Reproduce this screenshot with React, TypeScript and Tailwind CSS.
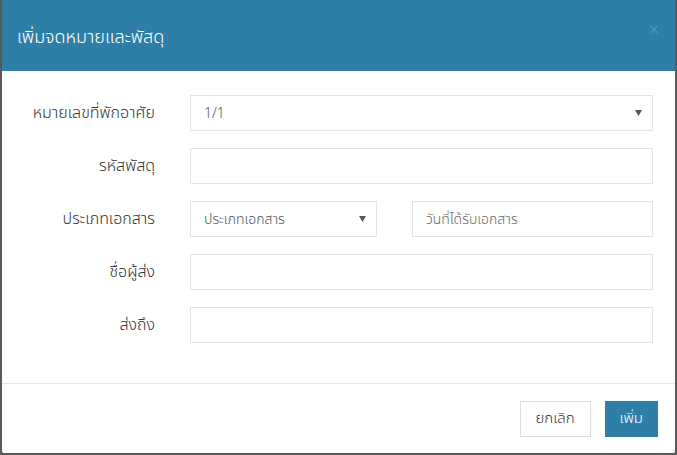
import { ChangeEvent, useState } from "react";

const font = { fontFamily: '"Noto Sans Thai", "Noto Sans", "Liberation Sans", sans-serif' };

function Caret() {
  return (
    <svg width="7" height="6" viewBox="0 0 7 6" className="shrink-0">
      <path d="M0 0 L7 0 L3.5 6 Z" fill="#555" />
    </svg>
  );
}

function Label({ children }: { children: string }) {
  return (
    <label className="w-[138px] shrink-0 text-right text-[16px] font-light text-[#333] leading-none">
      {children}
    </label>
  );
}

function TextBox({ placeholder, className = "" }: { placeholder?: string; className?: string }) {
  const [value, setValue] = useState("");
  return (
    <input
      value={value}
      onChange={(e: ChangeEvent<HTMLInputElement>) => setValue(e.target.value)}
      placeholder={placeholder}
      className={`h-[36px] border border-[#e3e3e3] bg-white px-[13px] text-[14px] font-light text-[#555] placeholder:text-[#666] outline-none ${className}`}
      style={font}
    />
  );
}

function SelectBox({ value, className = "" }: { value: string; className?: string }) {
  return (
    <div
      className={`h-[36px] border border-[#e3e3e3] bg-white pl-[13px] pr-[10px] flex items-center justify-between text-[14px] font-light text-[#555] ${className}`}
    >
      <span>{value}</span>
      <Caret />
    </div>
  );
}

export default function App() {
  return (
    <div className="w-[677px] h-[455px] bg-[#5a5a5a]" style={font}>
      <div className="w-[677px] h-[453px] flex flex-col bg-white border-x-2 border-[#5a5a5a] rounded-b-[3px] overflow-hidden">
        {/* หัว modal */}
        <div className="h-[71px] shrink-0 bg-[#2e7fa7] flex items-center justify-between pl-[15px] pr-[16px] pt-[4px]">
          <h4 className="text-[18px] font-light text-white leading-none">เพิ่มจดหมายและพัสดุ</h4>
          <button type="button" className="text-[#4f93b5] text-[18px] leading-none -mt-[14px]">
            ×
          </button>
        </div>

        {/* ฟอร์ม */}
        <div className="flex-1 flex flex-col gap-[17px] pt-[24px] pl-[15px] pr-[22px]">
          <div className="flex items-center gap-[35px]">
            <Label>หมายเลขที่พักอาศัย</Label>
            <SelectBox value="1/1" className="flex-1" />
          </div>
          <div className="flex items-center gap-[35px]">
            <Label>รหัสพัสดุ</Label>
            <TextBox className="flex-1" />
          </div>
          <div className="flex items-center gap-[35px]">
            <Label>ประเภทเอกสาร</Label>
            <SelectBox value="ประเภทเอกสาร" className="w-[187px]" />
            <TextBox placeholder="วันที่ได้รับเอกสาร" className="flex-1 min-w-0" />
          </div>
          <div className="flex items-center gap-[35px]">
            <Label>ชื่อผู้ส่ง</Label>
            <TextBox className="flex-1" />
          </div>
          <div className="flex items-center gap-[35px]">
            <Label>ส่งถึง</Label>
            <TextBox className="flex-1" />
          </div>
        </div>

        {/* ปุ่มด้านล่าง */}
        <div className="h-[70px] shrink-0 border-t border-[#e5e5e5] flex items-start justify-end gap-[14px] pt-[17px] pr-[17px]">
          <button
            type="button"
            className="h-[36px] px-[15px] border border-[#dcdcdc] bg-white text-[15px] font-light text-[#333]"
          >
            ยกเลิก
          </button>
          <button type="button" className="h-[36px] px-[15px] bg-[#2e7fa7] text-[15px] font-light text-white">
            เพิ่ม
          </button>
        </div>
      </div>
    </div>
  );
}
